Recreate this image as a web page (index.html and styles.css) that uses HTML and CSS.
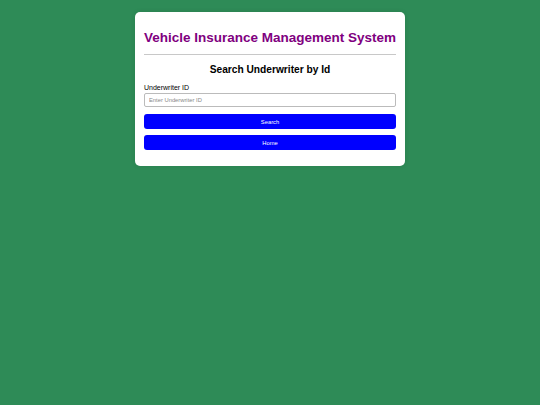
FILE: index.html
```html
<!DOCTYPE html>
<html>
<head>
<meta charset="utf-8">
<link rel="stylesheet" href="styles.css">
</head>
<body>
<div class="card">
  <h1 class="title">Vehicle Insurance Management System</h1>
  <hr class="rule">
  <h2 class="subtitle">Search Underwriter by Id</h2>
  <form class="form">
    <label class="label" for="uid">Underwriter ID</label>
    <input class="input" id="uid" type="text" placeholder="Enter Underwriter ID">
    <button class="btn btn-search" type="button">Search</button>
    <button class="btn btn-home" type="button">Home</button>
  </form>
</div>
</body>
</html>
```
FILE: styles.css
```css
html, body {
  margin: 0;
  padding: 0;
}
body {
  background: #2e8b57;
  font-family: "Liberation Sans", Arial, sans-serif;
  min-height: 405px;
  display: flex;
  justify-content: center;
  align-items: flex-start;
}
.card {
  margin-top: 12px;
  width: 270px;
  box-sizing: border-box;
  background: #fff;
  border-radius: 5px;
  padding: 18px 9px 16px 9px;
  box-shadow: 0 0 5px rgba(0,0,0,0.1);
}
.title {
  margin: 0;
  color: #800080;
  font-size: 13.5px;
  font-weight: bold;
  text-align: center;
  line-height: 16px;
  white-space: nowrap;
}
.rule {
  margin: 8px 0 0 0;
  border: 0;
  border-top: 1px solid #c8c8c8;
  height: 0;
}
.subtitle {
  margin: 9px 0 0 0;
  font-size: 10.2px;
  line-height: 12px;
  text-align: center;
  color: #000;
}
.form {
  margin-top: 8px;
  display: flex;
  flex-direction: column;
}
.label {
  font-size: 7px;
  line-height: 8px;
  color: #000;
}
.input {
  margin-top: 1px;
  height: 14px;
  box-sizing: border-box;
  border: 1px solid #bbb;
  border-radius: 2px;
  padding: 0 4px;
  font-family: "Liberation Sans", Arial, sans-serif;
  font-size: 5.8px;
}
.input::placeholder {
  color: #888;
}
.btn {
  height: 15px;
  border: 0;
  border-radius: 3px;
  background: #0000ff;
  color: #fff;
  font-family: "Liberation Sans", Arial, sans-serif;
  font-size: 5.8px;
  padding: 0;
}
.btn-search {
  margin-top: 7px;
}
.btn-home {
  margin-top: 6px;
}
```
